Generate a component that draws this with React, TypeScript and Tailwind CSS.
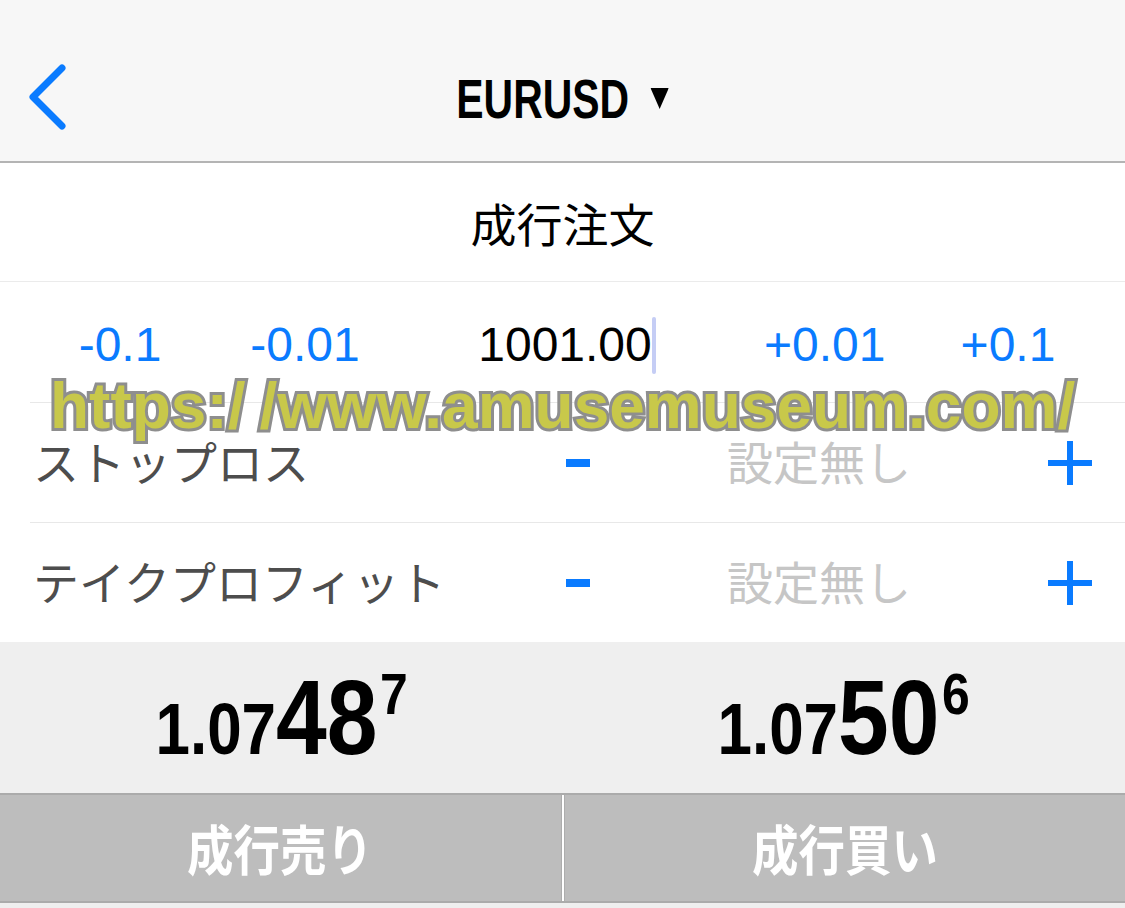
import React from "react";

const cjk = "font-['Noto_Sans_CJK_JP','Noto_Sans_CJK_SC',sans-serif]";
const latin = "font-['Liberation_Sans',Arial,sans-serif]";

const Price = ({ head, big, tail }: { head: string; big: string; tail: string }) => {
  return (
    <div className="flex items-center justify-center pb-[2px]">
      <div className={`${latin} flex items-baseline font-bold text-black leading-none scale-x-[0.86]`}>
        <span className="text-[72px]">{head}</span>
        <span className="text-[106px]">{big}</span>
        <span className="text-[58px] self-start mt-[1px] ml-[3px]">{tail}</span>
      </div>
    </div>
  );
};

const Minus = () => <div className="w-[24px] h-[8px] bg-[#0a7bff]" />;

const Plus = () => (
  <svg width="44" height="44" viewBox="0 0 44 44">
    <path d="M22 0v44M0 22h44" stroke="#0a7bff" strokeWidth="6" />
  </svg>
);

const SettingRow = ({ label }: { label: string }) => {
  return (
    <div className={`${cjk} grid grid-cols-[566px_161px_321px_1fr] items-center h-[119px]`}>
      {/* label */}
      <span className="pl-[33px] text-[46px] text-[#4d4d4d] leading-none mb-[6px]">{label}</span>
      <Minus />
      <span className="text-[46px] text-[#c6c6c6] leading-none mb-[6px]">設定無し</span>
      <Plus />
    </div>
  );
};

export default function App() {
  return (
    <div className="relative w-[1125px] h-[908px] overflow-hidden bg-white">
      {/* nav bar */}
      <header className="grid grid-cols-[1fr_auto_1fr] items-center h-[163px] pt-[32px] bg-[#f7f7f7] border-b-2 border-[#b4b4b4]">
        <div className="pl-[27px]">
          <svg width="42" height="66" viewBox="0 0 42 66">
            <path d="M35 4 L6 33 L35 62" fill="none" stroke="#0a7bff" strokeWidth="7" strokeLinecap="round" strokeLinejoin="round" />
          </svg>
        </div>
        <div className={`${latin} flex items-center gap-[30px] scale-x-[0.73] mt-[4px]`}>
          <span className="text-[56px] font-bold text-black leading-none">EURUSD</span>
          <svg width="25" height="21" viewBox="0 0 25 21">
            <path d="M0 0h25L12.5 21z" fill="#000" />
          </svg>
        </div>
        <div />
      </header>

      {/* title */}
      <div className={`${cjk} flex items-center justify-center h-[119px] border-b border-[#ebebeb]`}>
        <span className="text-[46px] text-black leading-none">成行注文</span>
      </div>

      {/* volume */}
      <div className={`${latin} flex items-center h-[120px] pt-[6px] text-[48px] leading-none`}>
        <span className="w-[240px] text-center text-[#0a7bff]">-0.1</span>
        <span className="w-[130px] text-center text-[#0a7bff]">-0.01</span>
        <span className="w-[394px] flex justify-center items-center text-black">
          1001.00
          <span className="w-[4px] h-[57px] bg-[#c5cdf5] rounded-full" />
        </span>
        <span className="w-[116px] text-center text-[#0a7bff]">+0.01</span>
        <span className="flex-1 pl-[11px] text-center text-[#0a7bff]">+0.1</span>
      </div>
      <div className="ml-[30px] h-px bg-[#e8e8e8]" />

      <SettingRow label="ストップロス" />
      <div className="ml-[30px] h-px bg-[#e8e8e8]" />
      <SettingRow label="テイクプロフィット" />

      {/* prices */}
      <div className="grid grid-cols-2 h-[151px] bg-[#efefef]">
        <Price head="1.07" big="48" tail="7" />
        <Price head="1.07" big="50" tail="6" />
      </div>

      {/* buttons */}
      <div className={`${cjk} flex h-[110px] border-t-2 border-b-2 border-[#ababab]`}>
        <button className="flex-1 flex items-center justify-center bg-[#bdbdbd] border-r border-[#adadad]">
          <span className="text-[54px] font-bold text-white leading-none scale-x-[0.86]">成行売り</span>
        </button>
        <div className="w-[2px] bg-white" />
        <button className="flex-1 flex items-center justify-center bg-[#bdbdbd] border-l border-[#adadad]">
          <span className="text-[54px] font-bold text-white leading-none scale-x-[0.86]">成行買い</span>
        </button>
      </div>
      <div className="h-[5px] bg-[#efefef]" />

      {/* watermark */}
      <div
        className={`${latin} absolute top-[374px] left-[50px] text-[64px] font-bold leading-none text-[#c8c84a] [-webkit-text-stroke:6px_#8e8e8e] [paint-order:stroke_fill] pointer-events-none whitespace-nowrap`}
      >
        https:<span className="mr-[14px]">/</span>/www.amusemuseum.com/
      </div>
    </div>
  );
}
